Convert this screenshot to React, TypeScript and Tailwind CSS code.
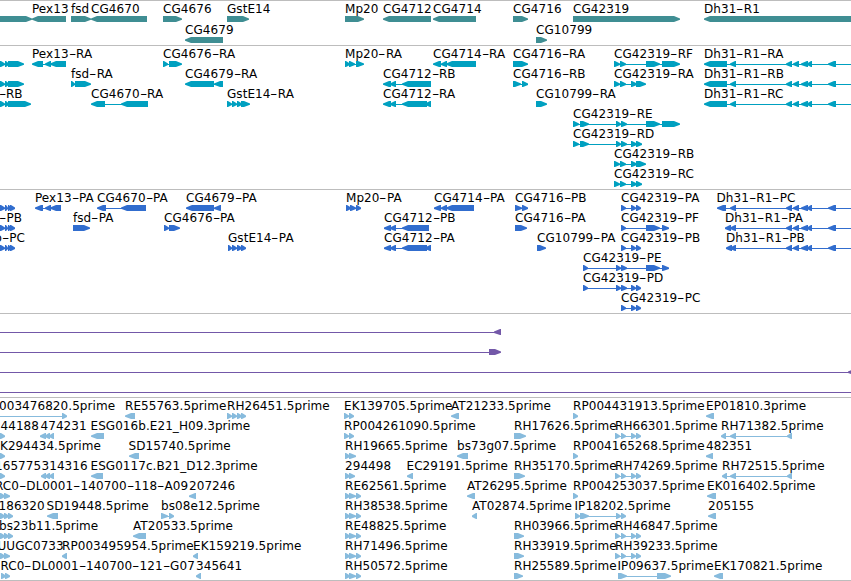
interface Feature {
  label?: string;
  x?: number;
  dir: "L" | "R";
  exons: number[][];
}

interface TrackProps {
  height: string;
  row?: string;
  color: string;
  rows: Feature[][];
}

const f = (label: string, dir: "L" | "R", exons: number[][], x?: number): Feature => ({ label, dir, exons, x });

const DH_TAIL = [[730, 736], [786, 792], [793, 799], [801, 808], [807, 812], [828, 836], [856, 862]];
const LEFT_PROTEIN = [[-6, 0], [0, 5], [5, 8], [8, 11], [10, 15]];

const genes: Feature[][] = [
  [
    f("", "R", [[-20, 32]]),
    f("Pex13", "L", [[32, 66]]),
    f("fsd", "R", [[71, 91]]),
    f("CG4670", "L", [[91, 147]]),
    f("CG4676", "R", [[163, 182]]),
    f("GstE14", "R", [[227, 249]]),
    f("Mp20", "R", [[345, 364]]),
    f("CG4712", "L", [[383, 431]]),
    f("CG4714", "L", [[433, 476]]),
    f("CG4716", "R", [[513, 528]]),
    f("CG42319", "R", [[573, 680]]),
    f("Dh31-R1", "L", [[704, 860]]),
  ],
  [f("CG4679", "L", [[185, 223]]), f("CG10799", "R", [[536, 547]])],
];

const transcripts: Feature[][] = [
  [
    f("", "R", [[-6, 0], [0, 5], [5, 9], [8, 24]]),
    f("Pex13-RA", "L", [[32, 43], [45, 51], [50, 66]]),
    f("CG4676-RA", "R", [[163, 168], [169, 182]]),
    f("Mp20-RA", "R", [[345, 350], [349, 355], [356, 364]]),
    f("CG4714-RA", "L", [[433, 441], [441, 447], [446, 476]]),
    f("CG4716-RA", "R", [[513, 528]]),
    f("CG42319-RF", "R", [[614, 620], [620, 626], [646, 660], [662, 680]]),
    f("Dh31-R1-RA", "L", [[704, 727], ...DH_TAIL]),
  ],
  [
    f("", "R", [[-6, 0], [0, 5], [5, 9], [8, 24]]),
    f("fsd-RA", "R", [[71, 75], [75, 91]]),
    f("CG4679-RA", "L", [[185, 214], [214, 223]]),
    f("CG4712-RB", "L", [[383, 391], [390, 396], [402, 431]]),
    f("CG4716-RB", "R", [[513, 521], [522, 528]]),
    f("CG42319-RA", "R", [[614, 620], [620, 626], [631, 637], [636, 646]]),
    f("Dh31-R1-RB", "L", [[704, 727], ...DH_TAIL]),
  ],
  [
    f("-RB", "R", [[-6, 0], [0, 5], [5, 9], [8, 31]], -1.5),
    f("CG4670-RA", "L", [[91, 105], [121, 148]]),
    f("GstE14-RA", "R", [[227, 232], [232, 237], [237, 242], [241, 250]]),
    f("CG4712-RA", "L", [[383, 391], [390, 396], [402, 427], [425, 431]]),
    f("CG10799-RA", "R", [[536, 547]]),
    f("Dh31-R1-RC", "L", [[704, 727], ...DH_TAIL]),
  ],
  [f("CG42319-RE", "R", [[573, 579], [580, 589], [616, 621], [621, 627], [646, 660], [662, 680]])],
  [f("CG42319-RD", "R", [[573, 579], [580, 589], [616, 621], [621, 627], [631, 637], [636, 642]])],
  [f("CG42319-RB", "R", [[614, 620], [620, 626], [631, 637], [636, 646]])],
  [f("CG42319-RC", "R", [[614, 620], [620, 626], [631, 637], [636, 642]])],
];

const proteins: Feature[][] = [
  [
    f("", "R", LEFT_PROTEIN),
    f("Pex13-PA", "L", [[35, 43], [45, 51], [50, 61]]),
    f("CG4670-PA", "L", [[97, 106], [121, 146]]),
    f("CG4679-PA", "L", [[186, 214], [214, 221]]),
    f("Mp20-PA", "R", [[346, 351], [350, 356], [356, 361]]),
    f("CG4714-PA", "L", [[434, 441], [441, 447], [446, 474]]),
    f("CG4716-PB", "R", [[515, 522], [522, 528]]),
    f("CG42319-PA", "R", [[621, 626], [631, 636], [636, 641]]),
    f("Dh31-R1-PC", "L", [[717, 726], ...DH_TAIL], 716.5),
  ],
  [
    f("-PB", "R", LEFT_PROTEIN, -1),
    f("fsd-PA", "R", [[73, 90]]),
    f("CG4676-PA", "R", [[164, 169], [169, 180]]),
    f("CG4712-PB", "L", [[384, 391], [390, 396], [402, 429]]),
    f("CG4716-PA", "R", [[515, 527]]),
    f("CG42319-PF", "R", [[621, 626], [646, 660], [662, 669]]),
    f("Dh31-R1-PA", "L", [[725, 731], ...DH_TAIL]),
  ],
  [
    f("o-PC", "R", LEFT_PROTEIN, -5.5),
    f("GstE14-PA", "R", [[228, 232], [232, 237], [237, 242], [241, 246]]),
    f("CG4712-PA", "L", [[384, 391], [390, 396], [402, 427], [425, 431]]),
    f("CG10799-PA", "R", [[537, 546]]),
    f("CG42319-PB", "R", [[621, 626], [631, 636], [636, 641]]),
    f("Dh31-R1-PB", "L", [[726, 732], ...DH_TAIL]),
  ],
  [f("CG42319-PE", "R", [[583, 588], [616, 621], [621, 627], [646, 660], [662, 669]])],
  [f("CG42319-PD", "R", [[583, 588], [616, 621], [621, 627], [631, 636], [636, 641]])],
  [f("CG42319-PC", "R", [[621, 626], [631, 636], [636, 641]])],
];

const spans: Feature[][] = [
  [f("", "L", [[-10, -5], [494, 501]])],
  [f("", "R", [[-10, -5], [489, 501]])],
  [f("", "L", [[-10, -5], [848, 855]])],
  [f("", "L", [[-10, -5], [856, 860]])],
];

const ests: Feature[][] = [
  [
    f("003476820.5prime", "R", [[-10, -5], [62, 67]], -1),
    f("RE55763.5prime", "L", [[125, 135]]),
    f("RH26451.5prime", "R", [[227, 232], [232, 237], [237, 242], [241, 246]]),
    f("EK139705.5prime", "R", [[344, 349], [349, 354]]),
    f("AT21233.5prime", "L", [[451, 459]]),
    f("RP004431913.5prime", "R", [[573, 578]]),
    f("EP01810.3prime", "L", [[706, 714]]),
  ],
  [
    f("44188", "R", [[-5, 0], [0, 5]], 0.5),
    f("474231", "L", [[40, 46], [45, 50], [49, 54]], 40.5),
    f("ESG016b.E21_H09.3prime", "L", [[91, 104]], 90.5),
    f("RP004261090.5prime", "R", [[344, 349], [349, 354]]),
    f("RH17626.5prime", "R", [[514, 526]]),
    f("RH66301.5prime", "R", [[615, 620], [621, 626], [631, 636], [636, 641]]),
    f("RH71382.5prime", "L", [[721, 726], [730, 736], [787, 792]]),
  ],
  [
    f("K294434.5prime", "R", [[-5, 0], [0, 5]], 0),
    f("SD15740.5prime", "L", [[129, 139]], 128.5),
    f("RH19665.5prime", "R", [[345, 350], [349, 356]]),
    f("bs73g07.5prime", "L", [[457, 468]]),
    f("RP004165268.5prime", "R", [[573, 578]]),
    f("482351", "L", [[706, 713]]),
  ],
  [
    f("165775", "R", [[-5, 0], [0, 5]], -5),
    f("314316", "L", [[41, 46], [45, 50], [49, 54]], 41.5),
    f("ESG0117c.B21_D12.3prime", "L", [[91, 103]], 90.5),
    f("294498", "R", [[345, 350], [349, 355]]),
    f("EC29191.5prime", "L", [[407, 413]], 406.5),
    f("RH35170.5prime", "R", [[514, 525]]),
    f("RH74269.5prime", "R", [[615, 620], [621, 626], [631, 636], [636, 641]]),
    f("RH72515.5prime", "L", [[722, 727], [730, 736], [787, 792]]),
  ],
  [
    f("RC0-DL0001-140700-118-A09", "R", [[-5, 0], [0, 5], [4, 10]], -5),
    f("207246", "L", [[189, 196]], 189),
    f("RE62561.5prime", "R", [[345, 350], [349, 356], [356, 361]]),
    f("AT26295.5prime", "L", [[467, 475]]),
    f("RP004253037.5prime", "R", [[573, 578]]),
    f("EK016402.5prime", "L", [[707, 716]]),
  ],
  [
    f("186320", "R", [[0, 5], [4, 9], [8, 13]], -1.5),
    f("SD19448.5prime", "L", [[47, 58]], 46.5),
    f("bs08e12.5prime", "R", [[161, 168], [169, 174]]),
    f("RH38538.5prime", "R", [[345, 350], [349, 356], [356, 361]]),
    f("AT02874.5prime", "L", [[472, 477]]),
    f("IP18202.5prime", "R", [[575, 580], [580, 589], [616, 621], [621, 626]], 574.5),
    f("205155", "L", [[708, 716]]),
  ],
  [
    f("bs23b11.5prime", "R", [[0, 5], [4, 9], [8, 13]], -1),
    f("AT20533.5prime", "L", [[133, 146]]),
    f("RE48825.5prime", "R", [[345, 350], [349, 356], [356, 361]]),
    f("RH03966.5prime", "R", [[514, 524]]),
    f("RH46847.5prime", "R", [[615, 620], [621, 626], [631, 636], [636, 641]]),
  ],
  [
    f("UUGC0733", "R", [[0, 5], [4, 10]], -2.5),
    f("RP003495954.5prime", "L", [[62, 67]]),
    f("EK159219.5prime", "L", [[193, 198]]),
    f("RH71496.5prime", "R", [[345, 350], [349, 356], [356, 361]]),
    f("RH33919.5prime", "R", [[514, 524]]),
    f("RH39233.5prime", "R", [[615, 620], [621, 626], [631, 636], [636, 641]]),
  ],
  [
    f("RC0-DL0001-140700-121-G07", "R", [[1, 6], [5, 10]], 0.5),
    f("345641", "L", [[196, 201]]),
    f("RH50572.5prime", "R", [[345, 350], [349, 356], [356, 361]]),
    f("RH25589.5prime", "R", [[514, 523]]),
    f("IP09637.5prime", "R", [[618, 627], [657, 671]], 617.5),
    f("EK170821.5prime", "L", [[714, 723]]),
  ],
];

function exonPoints(start: number, end: number, dir: "L" | "R") {
  const w = end - start;
  const [base, tip, s] = dir === "R" ? [start, end, 1] : [end, start, -1];
  if (w < 8) return `${base},0 ${base + s},0 ${tip},2.6 ${tip},4 ${base + s},6 ${base},6`;
  const neck = tip - s * 6;
  return `${base},0 ${neck},0 ${tip},2.5 ${tip},3.7 ${neck},6 ${base},6`;
}

function Label({ text, x }: { text: string; x: number }) {
  return (
    <span className="absolute top-0 whitespace-nowrap" style={{ left: x }}>
      {text.split("-").map((part, i) => (
        <span key={i}>
          {i > 0 && <span className="inline-block w-[7.4px] scale-x-[1.7] text-center">-</span>}
          {part}
        </span>
      ))}
    </span>
  );
}

function Track({ height, row = "h-5", color, rows }: TrackProps) {
  return (
    <section className={`shrink-0 border-t border-[#bdbdbd] ${height} ${color}`}>
      {rows.map((features, i) => (
        <div key={i} className={`relative ${row}`}>
          <svg className="absolute top-[15px] left-0 h-[6px] w-full overflow-visible">
            {features.map(({ exons, dir }, j) => {
              const from = exons[0][0];
              const to = exons[exons.length - 1][1];
              return (
                <g key={j} fill="currentColor">
                  {exons.length > 1 && <rect x={from + 1} y={3} width={to - from - 2} height={1} />}
                  {exons.map(([a, b], k) => (
                    <polygon key={k} points={exonPoints(a, b, dir)} />
                  ))}
                </g>
              );
            })}
          </svg>
          <div className="text-black">
            {features.map(({ label, x, exons }, j) =>
              label ? <Label key={j} text={label} x={x ?? exons[0][0]} /> : null,
            )}
          </div>
        </div>
      ))}
    </section>
  );
}

export default function App() {
  return (
    <main className="flex h-[581px] w-[851px] flex-col overflow-hidden bg-white font-['DejaVu_Sans',sans-serif] text-[12px] leading-[16px] tracking-[0.06px]">
      <Track height="h-[45px]" row="h-[21px]" color="text-[#3f8e93]" rows={genes} />
      <Track height="h-[144px]" color="text-[#00a0c0]" rows={transcripts} />
      <Track height="h-[124px]" color="text-[#316dce]" rows={proteins} />
      <Track height="h-[84px]" color="text-[#7358a8]" rows={spans} />
      <Track height="h-[183px]" color="text-[#87bbdd]" rows={ests} />
      <div className="h-px shrink-0 bg-[#bdbdbd]" />
    </main>
  );
}
